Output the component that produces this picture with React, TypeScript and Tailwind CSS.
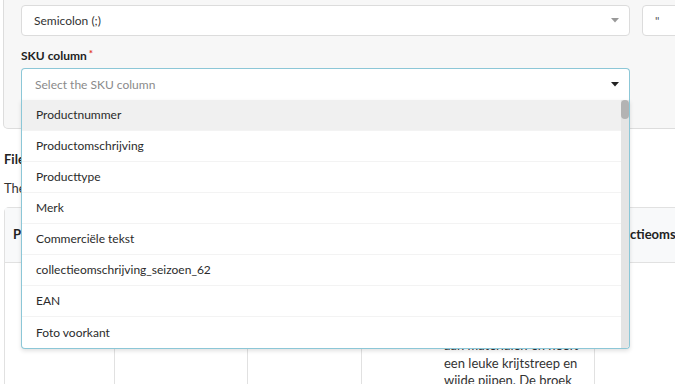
import React from 'react';

const columns = [
  'Productnummer',
  'Productomschrijving',
  'Producttype',
  'Merk',
  'Commerciële tekst',
  'collectieomschrijving_seizoen_62',
  'EAN',
  'Foto voorkant',
];

const bodyLines = [
  'Deze broek van het merk',
  'is gemaakt van een mix',
  'van duurzame en zachte',
  'stoffen. Hij bestaat uit',
  'aan materialen en heeft',
  'een leuke krijtstreep en',
  'wijde pijpen. De broek',
];

function Caret({ dark }: { dark?: boolean }) {
  return (
    <svg width="8" height="5" viewBox="0 0 8 5" className="ml-auto shrink-0">
      <path d="M0 0h8L4 4.5z" fill={dark ? '#222222' : '#999999'} />
    </svg>
  );
}

function SkuSelect() {
  return (
    <div className="relative w-[609px]">
      <div className="h-[32px] bg-white border border-b-0 border-[#8cc7d7] rounded-t-[4px] flex items-center pl-[13px] pr-[10px]">
        <span className="text-[#8a8a8a]">Select the SKU column</span>
        <Caret dark />
      </div>
      <div className="absolute top-full left-0 right-0 z-10 flex bg-white border border-t-0 border-[#8cc7d7] rounded-b-[4px] shadow-[0_2px_4px_rgba(0,0,0,0.12)] overflow-hidden">
        <ul className="flex-1">
          {columns.map((c, i) => (
            <li
              key={c}
              className={
                'h-[31px] flex items-center pl-[14px] text-[#2b2b2b] ' +
                (i === 0 ? 'bg-[#f0f0f0] ' : '') +
                (i < columns.length - 1 ? 'border-b border-[#f3f3f3]' : 'h-[30px]')
              }
            >
              {c}
            </li>
          ))}
        </ul>
        <div className="w-[8px] bg-[#e4e4e4] flex flex-col">
          <div className="h-[19px] bg-[#b3b3b3] rounded-full" />
        </div>
      </div>
    </div>
  );
}

export default function App() {
  return (
    <div className="w-[675px] h-[384px] overflow-hidden bg-white text-[12px] text-[#333333] font-['Lato',sans-serif]">
      <div className="pl-[3px]">
        <div className="w-[760px] h-[129px] bg-[#f7f7f7] border border-t-0 border-[#dddddd] rounded-b-[5px] pl-[17px] pt-[5px]">
          <div className="flex gap-[12px]">
            <div className="w-[609px] h-[31px] bg-white border border-[#dcdcdc] rounded-[4px] flex items-center pl-[12px] pr-[10px]">
              <span>Semicolon (;)</span>
              <Caret />
            </div>
            <div className="w-[80px] h-[31px] bg-white border border-[#dcdcdc] rounded-[4px] flex items-center pl-[12px] text-[#555555]">
              "
            </div>
          </div>
          <div className="mt-[12px] font-bold text-[12px] leading-[16px] text-[#222222]">
            SKU column<span className="text-[#e0352b] text-[10px] align-top ml-[2px] relative -top-[3px]">*</span>
          </div>
          <div className="mt-[4px]">
            <SkuSelect />
          </div>
        </div>

        <div className="pl-[1px]">
          <div className="mt-[22px] font-bold text-[13px] leading-[17px] text-[#222222]">File preview</div>
          <p className="mt-[12px] text-[13px] leading-[17px]">The first rows of the uploaded file are shown below.</p>
          <div className="mt-[10px] w-[800px] border-l border-t border-[#e1e1e1] rounded-tl-[5px]">
            <div className="flex h-[55px] bg-[#f8f9fa] border-b border-[#e1e1e1] font-bold text-[13px] text-[#222222]">
              {[
                ['w-[110px]', 'Productnummer'],
                ['w-[133px]', 'Productomschrijving'],
                ['w-[114px]', 'Producttype'],
                ['w-[233px]', 'Commerciële tekst'],
                ['w-[210px]', 'collectieomschrijving_seizoen_62'],
              ].map(([w, t]) => (
                <div key={t} className={w + ' shrink-0 flex items-center pl-[8px] border-r border-[#e1e1e1] overflow-hidden whitespace-nowrap'}>
                  {t}
                </div>
              ))}
            </div>
            <div className="flex h-[200px] text-[13px] leading-[17.5px]">
              <div className="w-[110px] shrink-0 border-r border-[#e1e1e1]" />
              <div className="w-[133px] shrink-0 border-r border-[#e1e1e1]" />
              <div className="w-[114px] shrink-0 border-r border-[#e1e1e1]" />
              <div className="w-[233px] shrink-0 border-r border-[#e1e1e1] pl-[82px] pt-[4px]">
                {bodyLines.map(l => (
                  <div key={l} className="whitespace-nowrap">{l}</div>
                ))}
              </div>
              <div className="w-[210px] shrink-0" />
            </div>
          </div>
        </div>
      </div>
    </div>
  );
}
